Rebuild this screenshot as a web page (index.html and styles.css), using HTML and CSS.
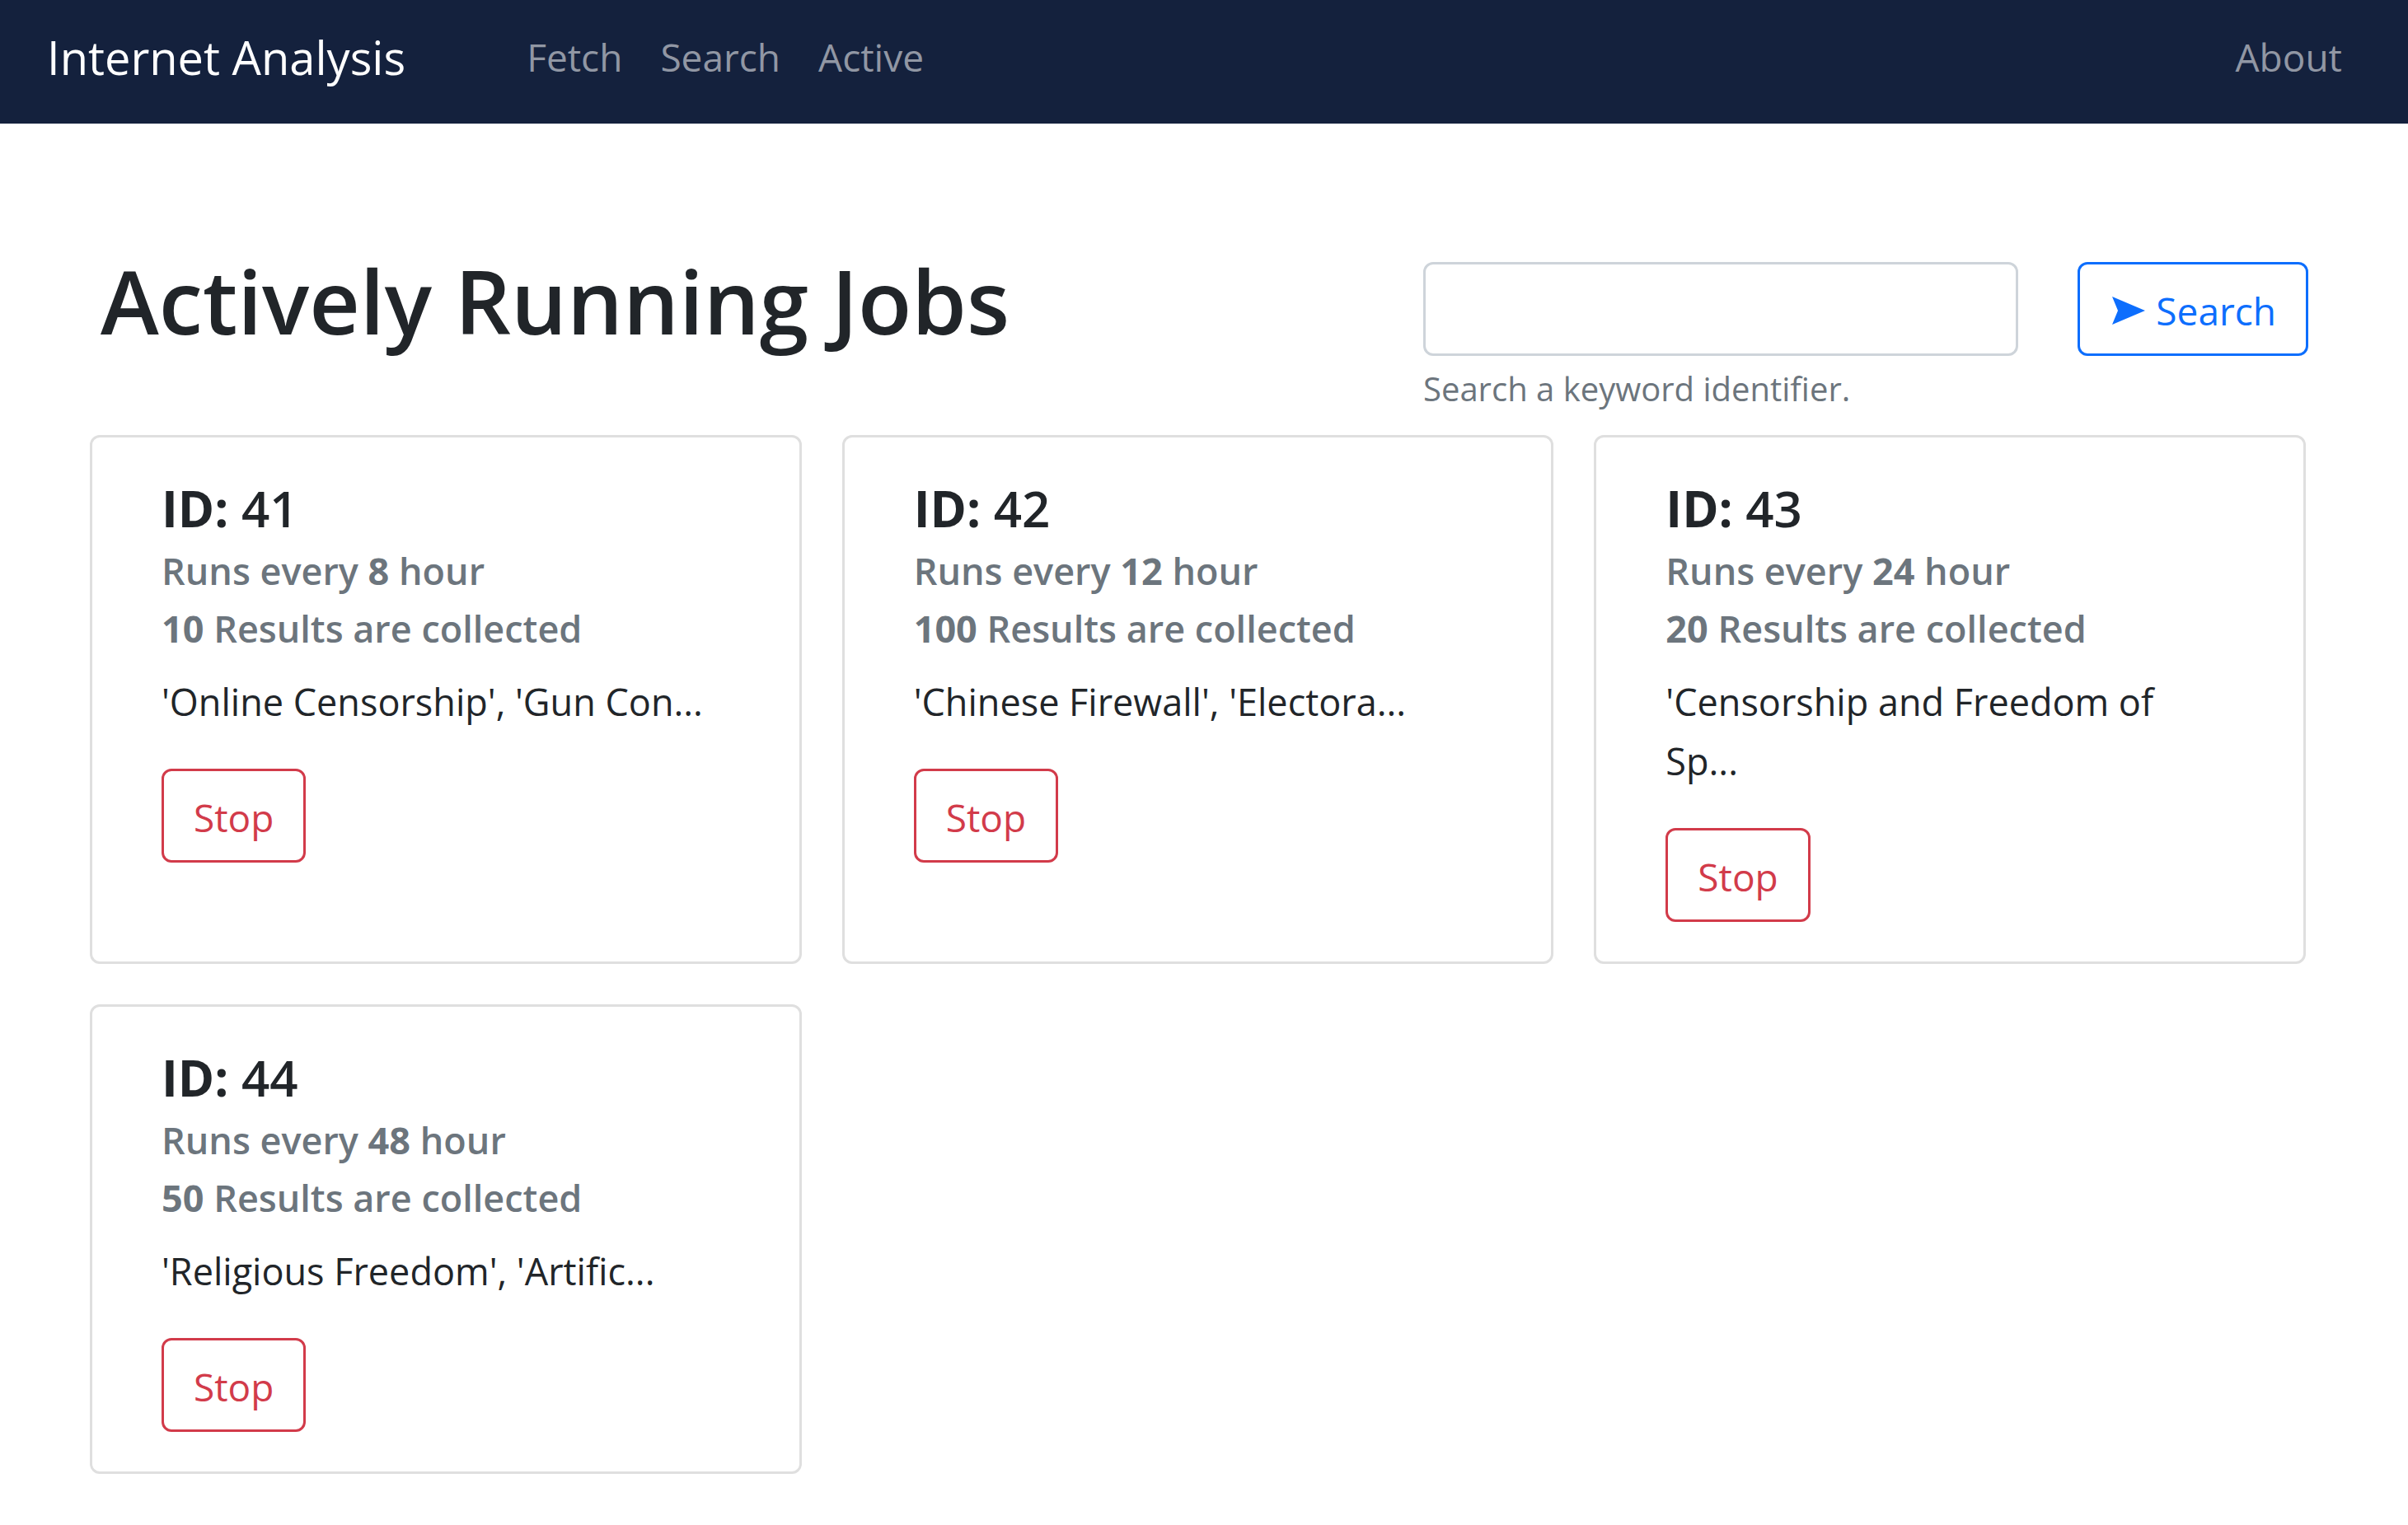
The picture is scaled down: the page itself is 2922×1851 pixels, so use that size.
FILE: index.html
```html
<!DOCTYPE html>
<html lang="en">
<head>
<meta charset="utf-8">
<meta name="viewport" content="width=device-width, initial-scale=1">
<title>Internet Analysis</title>
<link rel="stylesheet" href="styles.css">
</head>
<body>
<nav class="navbar">
  <a class="brand" href="#">Internet Analysis</a>
  <div class="nav-links">
    <a class="nav-link" href="#">Fetch</a>
    <a class="nav-link" href="#">Search</a>
    <a class="nav-link" href="#">Active</a>
  </div>
  <a class="nav-link" href="#">About</a>
</nav>
<main class="page">
  <header class="page-header">
    <h1 class="title">Actively Running Jobs</h1>
    <form class="search">
      <div class="field">
        <input class="input" id="keyword" type="text" aria-labelledby="keyword-help">
        <label class="help" id="keyword-help" for="keyword">Search a keyword identifier.</label>
      </div>
      <button class="btn btn-primary" type="button">
        <svg class="icon" viewBox="0 0 44 34" aria-hidden="true"><path d="M3 0 43 17 3 34 10 17Z"/></svg>
        Search
      </button>
    </form>
  </header>
  <section class="cards">
    <article class="card">
      <h2 class="card-title"><b>ID:</b> 41</h2>
      <p class="meta">Runs every <b>8</b> hour</p>
      <p class="meta"><b>10</b> Results are collected</p>
      <p class="keywords">'Online Censorship', 'Gun Con...</p>
      <button class="btn btn-danger" type="button">Stop</button>
    </article>
    <article class="card">
      <h2 class="card-title"><b>ID:</b> 42</h2>
      <p class="meta">Runs every <b>12</b> hour</p>
      <p class="meta"><b>100</b> Results are collected</p>
      <p class="keywords">'Chinese Firewall', 'Electora...</p>
      <button class="btn btn-danger" type="button">Stop</button>
    </article>
    <article class="card">
      <h2 class="card-title"><b>ID:</b> 43</h2>
      <p class="meta">Runs every <b>24</b> hour</p>
      <p class="meta"><b>20</b> Results are collected</p>
      <p class="keywords">'Censorship and Freedom of Sp...</p>
      <button class="btn btn-danger" type="button">Stop</button>
    </article>
    <article class="card">
      <h2 class="card-title"><b>ID:</b> 44</h2>
      <p class="meta">Runs every <b>48</b> hour</p>
      <p class="meta"><b>50</b> Results are collected</p>
      <p class="keywords">'Religious Freedom', 'Artific...</p>
      <button class="btn btn-danger" type="button">Stop</button>
    </article>
  </section>
</main>
</body>
</html>
```
FILE: styles.css
```css
*, *::before, *::after { box-sizing: border-box; }

body {
  margin: 0;
  background: #fff;
  color: #212529;
  font: 400 45px/72px "Open Sans", "Noto Sans", sans-serif;
}

h1, h2, p { margin: 0; }
b { font-weight: 700; }

.navbar {
  display: flex;
  align-items: center;
  padding: 24px 80px 36px 57px;
  background: #14213d;
  line-height: 90px;
}
.brand {
  margin-right: 147px;
  color: #fff;
  font-size: 56px;
  text-decoration: none;
}
.nav-links {
  display: flex;
  gap: 46px;
  margin-right: auto;
}
.nav-link {
  color: #9197a4;
  font-size: 46px;
  text-decoration: none;
}

.page { padding: 149px 121px 60px 109px; }

.page-header {
  display: flex;
  justify-content: space-between;
  margin-bottom: 26px;
}
.title {
  padding-left: 13px;
  font-size: 107px;
  font-weight: 600;
  line-height: 132px;
}
.search {
  display: flex;
  flex: 0 1 1074px;
  align-items: flex-start;
  gap: 72px;
  padding-top: 19px;
}
.field { flex: 1; }
.input {
  display: block;
  width: 100%;
  height: 114px;
  padding: 18px 36px;
  border: 3px solid #ced4da;
  border-radius: 12px;
  background: #fff;
  color: inherit;
  font: inherit;
}
.help {
  display: block;
  margin-top: 10px;
  color: #6c757d;
  font-size: 40px;
  line-height: 60px;
}

.btn {
  display: inline-flex;
  align-items: center;
  gap: 12px;
  height: 114px;
  padding: 4px 36px 0;
  border: 3px solid;
  border-radius: 12px;
  background: transparent;
  font: inherit;
  font-size: 46px;
  cursor: pointer;
}
.btn-primary { border-color: #0d6efd; color: #0d6efd; }
.btn-danger { border-color: #d23b4a; color: #d23b4a; }
.icon {
  width: 44px;
  height: 34px;
  fill: currentColor;
}

.cards {
  display: grid;
  grid-template-columns: repeat(3, 1fr);
  gap: 49px;
  margin-right: 3px;
}
.card {
  padding: 50px 96px 48px 84px;
  border: 3px solid #dfdfdf;
  border-radius: 12px;
}
.card-title {
  margin-bottom: 5px;
  font-size: 60px;
  font-weight: 600;
  line-height: 72px;
}
.meta {
  color: #6c757d;
  font-weight: 600;
  line-height: 70px;
}
.keywords { margin: 18px 0 45px; }
```
